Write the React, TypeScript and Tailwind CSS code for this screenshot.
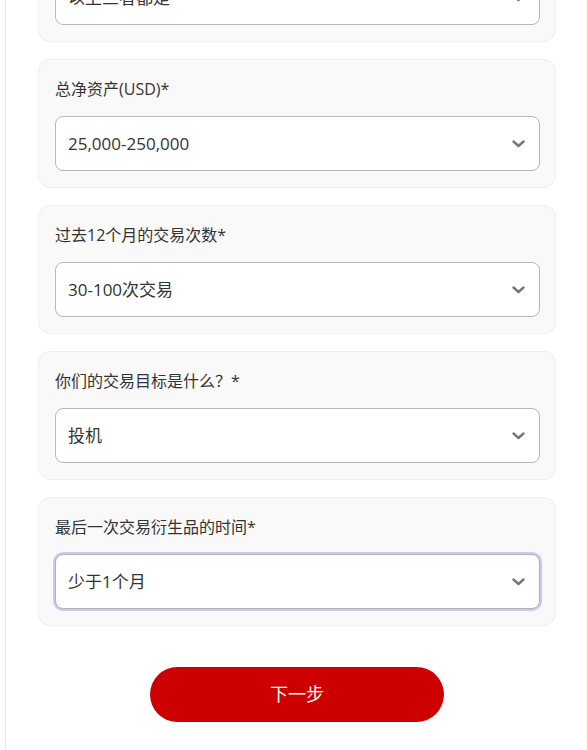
import React from "react";

const fields = [
  { label: "以下哪项适用于你？*", value: "以上三者都是" },
  { label: "总净资产(USD)*", value: "25,000-250,000" },
  { label: "过去12个月的交易次数*", value: "30-100次交易" },
  { label: "你们的交易目标是什么？*", value: "投机" },
  { label: "最后一次交易衍生品的时间*", value: "少于1个月", focused: true },
];

const Chevron = () => (
  <svg width="13" height="8" viewBox="0 0 13 8" fill="none">
    <path d="M1.5 1.5 L6.5 6 L11.5 1.5" stroke="#777" strokeWidth="2.4" strokeLinecap="round" strokeLinejoin="round" />
  </svg>
);

const App = () => {
  return (
    <div
      className="h-screen bg-white overflow-hidden"
      style={{ fontFamily: '"Open Sans", "Noto Sans CJK SC", sans-serif' }}
    >
      <div className="flow-root ml-[5px] h-full border-l border-[#e6e6e6] pl-[32px] pr-[31px]">
        <div className="-mt-[87px] flex flex-col gap-[17px]">
          {fields.map((f) => (
            <div
              key={f.label}
              className="rounded-xl border border-[#efefef] bg-[#f9f9f9] pl-4 pr-[15px] pt-[19px] pb-4"
            >
              <div className="text-base leading-5 text-[#333]">{f.label}</div>
              <div
                className={
                  "mt-[17px] flex h-[55px] items-center justify-between rounded-lg border bg-white pl-3 pr-[14px] " +
                  (f.focused
                    ? "border-[#b0b0b0] ring-2 ring-[#c5cbf3]"
                    : "border-[#b8b8b8]")
                }
              >
                <span className="text-[17px] text-[#333]">{f.value}</span>
                <Chevron />
              </div>
            </div>
          ))}
        </div>
        <div className="mt-[41px] flex justify-center">
          <button className="h-[55px] w-[294px] rounded-full bg-[#cc0000] text-[18px] text-white">
            下一步
          </button>
        </div>
      </div>
    </div>
  );
};

export default App;
